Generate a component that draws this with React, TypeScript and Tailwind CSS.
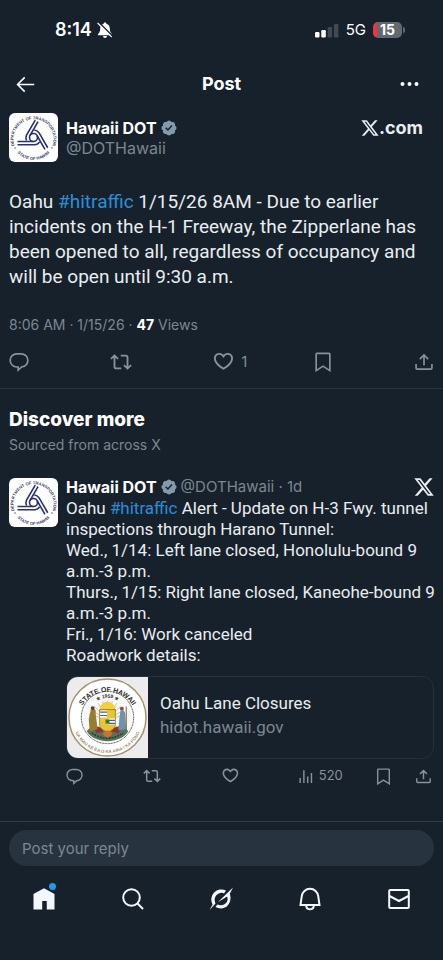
import React from "react";

type IconProps = { className?: string };

const Stroke = ({ className = "", children, width = 2 }: { className?: string; children: React.ReactNode; width?: number }) => (
  <svg viewBox="0 0 24 24" fill="none" stroke="currentColor" strokeWidth={width} className={className} aria-hidden="true">
    {children}
  </svg>
);

const ReplyIcon = ({ className }: IconProps) => (
  <Stroke className={className}>
    <path d="M9.400 2.200h5.200c4.500 0 8 3.300 8 7.600 0 4.200-3 7.300-7.400 8.100l-4.200 3.800v-3.700H9.400c-4.600 0-8-3.600-8-8.100 0-4.400 3.500-7.700 8-7.700z" />
  </Stroke>
);

const RepostIcon = ({ className }: IconProps) => (
  <Stroke className={className}>
    <path d="M1 8.500 4.900 4.800l3.900 3.700M4.900 5v12.200c0 1 .7 1.800 1.800 1.800h5.600M23 15.500l-3.900 3.700-3.900-3.700M19.100 19V6.800c0-1-.7-1.800-1.800-1.800h-5.600" />
  </Stroke>
);

const HeartIcon = ({ className }: IconProps) => (
  <svg viewBox="0 2 23 22" fill="currentColor" className={className} aria-hidden="true">
    <path d="M16.697 5.5c-1.222-.06-2.679.51-3.89 2.16l-.805 1.09-.806-1.09C9.984 6.01 8.526 5.44 7.304 5.5c-1.243.07-2.349.78-2.91 1.91-.552 1.12-.633 2.78.479 4.82 1.074 1.97 3.257 4.27 7.129 6.61 3.87-2.34 6.052-4.64 7.126-6.61 1.111-2.04 1.03-3.7.477-4.82-.561-1.13-1.666-1.84-2.908-1.91zm4.187 7.69c-1.351 2.48-4.001 5.12-8.379 7.67l-.503.3-.504-.3c-4.379-2.55-7.029-5.19-8.382-7.67-1.36-2.5-1.41-4.86-.514-6.67.887-1.79 2.647-2.91 4.601-3.01 1.651-.09 3.368.56 4.798 2.01 1.429-1.45 3.146-2.1 4.796-2.01 1.954.1 3.714 1.22 4.601 3.01.896 1.81.846 4.17-.514 6.67z" />
  </svg>
);

const BookmarkIcon = ({ className }: IconProps) => (
  <Stroke className={className}>
    <path d="M3.800 2.500c0-.5.400-.9.900-.9h14.600c.5 0 .9.400.9.900v19.800L12 17l-8.200 5.300z" />
  </Stroke>
);

const ShareIcon = ({ className }: IconProps) => (
  <Stroke className={className}>
    <path d="M12 16V4M7 8.500l5-5 5 5M2.500 14.500v4.700c0 .8.600 1.300 1.300 1.300h16.400c.7 0 1.300-.5 1.300-1.300v-4.700" />
  </Stroke>
);

const ViewsIcon = ({ className }: IconProps) => (
  <Stroke className={className}>
    <path d="M3 21v-7M8.300 21V3M13.700 21v-9M19 21V7" />
  </Stroke>
);

const VerifiedIcon = ({ className }: IconProps) => (
  <svg viewBox="1 1 20 20" fill="currentColor" className={className} role="img" aria-label="Verified account">
    <path d="M20.396 11c-.018-.646-.215-1.275-.57-1.816-.354-.54-.852-.972-1.438-1.246.223-.607.27-1.264.14-1.897-.131-.634-.437-1.218-.882-1.687-.47-.445-1.053-.75-1.687-.882-.633-.13-1.29-.083-1.897.14-.273-.587-.704-1.086-1.245-1.44S11.647 1.62 11 1.604c-.646.017-1.273.213-1.813.568s-.969.854-1.24 1.44c-.608-.223-1.267-.272-1.902-.14-.635.13-1.22.436-1.69.882-.445.47-.749 1.055-.878 1.688-.13.633-.08 1.29.144 1.896-.587.274-1.087.705-1.443 1.245-.356.54-.555 1.17-.574 1.817.02.647.218 1.276.574 1.817.356.54.856.972 1.443 1.245-.224.606-.274 1.263-.144 1.896.13.634.433 1.218.877 1.688.47.443 1.054.747 1.687.878.633.132 1.29.084 1.897-.136.274.586.705 1.084 1.246 1.439.54.354 1.17.551 1.816.569.647-.016 1.276-.213 1.817-.567s.972-.854 1.245-1.44c.604.239 1.266.296 1.903.164.636-.132 1.22-.447 1.68-.907.46-.46.776-1.044.908-1.681s.075-1.299-.165-1.903c.586-.274 1.084-.705 1.439-1.246.354-.54.551-1.17.569-1.816zM9.662 14.85l-3.429-3.428 1.293-1.302 2.072 2.072 4.4-4.794 1.347 1.246z" />
  </svg>
);

const XLogo = ({ className }: IconProps) => (
  <svg viewBox="1 2 22 20" fill="currentColor" className={className} role="img" aria-label="X">
    <path d="M18.244 2.25h3.308l-7.227 8.26 8.502 11.24H16.17l-5.214-6.817L4.99 21.75H1.68l7.73-8.835L1.254 2.25H8.08l4.713 6.231zm-1.161 17.52h1.833L7.084 4.126H5.117z" />
  </svg>
);

const Avatar = ({ id }: { id: string }) => (
  <svg viewBox="0 0 49 49" className="size-[49px] shrink-0 rounded-md bg-white" role="img" aria-label="Hawaii DOT">
    <defs>
      <path id={`${id}-top`} d="M5.500 32.500A20 20 0 1 1 43.500 32.500" />
      <path id={`${id}-bottom`} d="M5.500 36A22 22 0 0 0 43.500 36" />
    </defs>
    <g fill="#3a3d63" fontFamily="Liberation Sans, sans-serif" fontSize="4.200" fontWeight="700">
      <text><textPath href={`#${id}-top`} startOffset="50%" textAnchor="middle">DEPARTMENT OF TRANSPORTATION</textPath></text>
      <text><textPath href={`#${id}-bottom`} startOffset="50%" textAnchor="middle">STATE OF HAWAII</textPath></text>
    </g>
    <circle cx="6" cy="35" r=".7" fill="#3a3d63" />
    <circle cx="43" cy="35" r=".7" fill="#3a3d63" />
    <g fill="none" stroke="#2b2f75" strokeWidth="1.600">
      {[0, 120, 240].map((angle) => (
        <g key={angle} transform={`rotate(${angle} 24.500 24.500)`}>
          <path d="M8.500 28.500h16" />
          <path d="M8.500 31.700h17.500c2-.2 3.500-1.200 4.600-2.700" />
        </g>
      ))}
      <circle cx="24.500" cy="24.500" r="4" />
    </g>
  </svg>
);

const Seal = () => (
  <svg viewBox="0 0 82 82" className="size-[81px] shrink-0 bg-[#ececec]" role="img" aria-label="State of Hawaii seal">
    <defs>
      <path id="seal-top" d="M11 45A30 30 0 1 1 71 45" />
      <path id="seal-bottom" d="M5 41A36 36 0 0 0 77 41" />
      <path id="seal-year" d="M21 41A20 20 0 0 1 61 41" />
    </defs>
    <circle cx="41" cy="41" r="39" fill="#fff" stroke="#a4916d" strokeWidth="1.500" />
    <circle cx="41" cy="41" r="26.500" fill="#f8f8f6" stroke="#34352f" strokeWidth="1" strokeDasharray="1 .6" />
    <g stroke="#a8a99f" strokeWidth=".6">
      {[-75, -60, -45, -30, -15, 0, 15, 30, 45, 60, 75].map((a) => (
        <path key={a} d="M41 34V24" transform={`rotate(${a} 41 43)`} />
      ))}
    </g>
    <g fontFamily="Liberation Sans, sans-serif" fontWeight="700">
      <text fontSize="7" fill="#2a2a2a"><textPath href="#seal-top" startOffset="50%" textAnchor="middle">STATE  OF  HAWAII</textPath></text>
      <text fontSize="5" fill="#333"><textPath href="#seal-year" startOffset="50%" textAnchor="middle">★ 1959 ★</textPath></text>
      <text fontSize="4.500" fill="#a08c68"><textPath href="#seal-bottom" startOffset="50%" textAnchor="middle">UA MAU KE EA O KA AINA I KA PONO</textPath></text>
    </g>
    <path d="M33 33a8 8 0 0 1 16 0z" fill="#f3cf3e" />
    <path d="M20 55c4-6 9-4 12-1h18c4-4 9-4 12 1-4 7-13 10-21 10s-17-3-21-10z" fill="#53735a" />
    <path d="M27 51c4-2 8 0 10 4l-7 2zM55 51c-4-2-8 0-10 4l7 2z" fill="#8f3431" />
    <path d="M33 33h16v15c0 4-4 6-8 8-4-2-8-4-8-8z" fill="#e9c631" stroke="#5d532a" strokeWidth=".6" />
    <path d="M33.500 34h7v7h-7zM42 42h6.500v6H42z" fill="#fff" />
    <path d="M33.500 35.500h7M33.500 39h7M42 44h6.500M42 47h6.500" stroke="#435ca0" strokeWidth="1.200" />
    <path d="M39 43h4v4h-4z" fill="#397448" />
    <path d="M24 33c3-3 6 0 5 4l2 16-8 2-1-12z" fill="#9a7c2e" />
    <circle cx="26" cy="31.500" r="2" fill="#5c402d" />
    <path d="M54 34c3-2 5 1 5 4l1 15-8 1 1-12z" fill="#6c94ad" />
    <circle cx="55.500" cy="32" r="2" fill="#80543b" />
    <path d="M60 30v24" stroke="#93552f" strokeWidth="1" />
    <path d="M36 58c2-5 8-5 10 0l-5 4z" fill="#c87430" />
    <path d="M25 57c5 2 8 5 16 5s11-3 16-5" fill="none" stroke="#263b30" strokeWidth="1.500" strokeDasharray="2 1" />
  </svg>
);

const Hashtag = () => <a href="#hitraffic" className="text-[#2a8fd8]">#hitraffic</a>;

const StatusBar = () => (
  <div className="flex h-[60px] items-center justify-between pr-[38px] pl-[55px] text-white">
    <div className="flex items-center gap-1">
      <span className="text-lg font-semibold">8:14</span>
      <svg viewBox="0 0 18 18" className="size-[18px]" aria-hidden="true">
        <path d="M9 1.500c.8 0 1.300.5 1.400 1.200 2.300.7 3.400 2.500 3.400 4.900 0 3.300 1 4.200 2 5.300.5.600.2 1.300-.6 1.300H2.800c-.8 0-1.100-.7-.6-1.300 1-1.100 2-2 2-5.300 0-2.400 1.100-4.200 3.400-4.900.1-.7.6-1.200 1.400-1.200zM7 15h4a2 2 0 0 1-4 0z" fill="currentColor" />
        <path d="m2.800 1.200 14 14" stroke="#17212b" strokeWidth="1.500" />
        <path d="m1.600 2 14.200 14.200" stroke="currentColor" strokeWidth="1.200" />
      </svg>
    </div>
    <div className="flex items-center gap-[7px]">
      <svg viewBox="0 0 24 15" className="h-[15px] w-6" aria-hidden="true">
        <rect x="0" y="9" width="4.500" height="5.500" rx="1.200" fill="#fff" />
        <rect x="6.300" y="7" width="4.500" height="7.500" rx="1.200" fill="#fff" />
        <rect x="12.600" y="4" width="4.500" height="10.500" rx="1.200" fill="#414a53" />
        <rect x="18.900" y="1" width="4.500" height="13.500" rx="1.200" fill="#414a53" />
      </svg>
      <span className="text-[15px]">5G</span>
      <div className="flex items-center gap-px">
        <div className="flex h-4 w-[29px] items-center justify-center rounded-[5px] bg-linear-to-r from-[#f0343d] from-15% to-[#626a71] to-15% text-sm font-bold">15</div>
        <div className="h-1.5 w-0.5 rounded-r-full bg-[#626a71]" />
      </div>
    </div>
  </div>
);

const action = "flex flex-1 items-center";

export default function App() {
  return (
    <div className="flex min-h-screen flex-col bg-[#17212b] font-['Inter',sans-serif] text-[#e9edf0]">
      <StatusBar />
      <header className="grid h-12 grid-cols-3 items-center px-4 text-white">
        <button type="button" aria-label="Back" className="justify-self-start">
          <Stroke className="size-[19px]">
            <path d="M23 12H3M11 3 2 12l9 9" />
          </Stroke>
        </button>
        <h1 className="text-center text-lg font-bold">Post</h1>
        <button type="button" aria-label="More" className="justify-self-end pr-2">
          <svg viewBox="0 0 20 6" fill="currentColor" className="h-1.5 w-5" aria-hidden="true">
            <circle cx="3.500" cy="3" r="2" />
            <circle cx="10.500" cy="3" r="2" />
            <circle cx="17.500" cy="3" r="2" />
          </svg>
        </button>
      </header>

      <main className="flex grow flex-col">
        <article className="border-b border-[#25303a] px-[9px] pt-[5px]">
          <div className="flex items-center gap-2">
            <Avatar id="main" />
            <div className="grow text-base leading-5">
              <div className="flex items-center gap-1">
                <span className="font-bold text-white">Hawaii DOT</span>
                <VerifiedIcon className="size-4 text-[#829aab]" />
              </div>
              <div className="text-[#7b8791]">@DOTHawaii</div>
            </div>
            <div className="flex items-center pr-[11px] pb-5">
              <XLogo className="h-4 w-[18px]" />
              <span className="text-lg leading-5 font-bold">.com</span>
            </div>
          </div>
          <p className="mt-[27px] font-['Roboto',sans-serif] text-[19px] leading-[25px]">
            Oahu <Hashtag /> 1/15/26 8AM - Due to earlier<br />
            incidents on the H-1 Freeway, the Zipperlane has<br />
            been opened to all, regardless of occupancy and<br />
            will be open until 9:30 a.m.
          </p>
          <p className="mt-[26px] text-sm leading-5 text-[#7b8791]">
            8:06 AM · 1/15/26 · <span className="font-bold text-white">47</span> Views
          </p>
          <div className="flex h-[53px] items-center text-[#86929c]">
            <button type="button" aria-label="Reply" className={action}><ReplyIcon className="size-5" /></button>
            <button type="button" aria-label="Repost" className={action}><RepostIcon className="size-[22px]" /></button>
            <button type="button" aria-label="Like" className="flex flex-1 items-center gap-2 text-sm"><HeartIcon className="size-[22px]" />1</button>
            <button type="button" aria-label="Bookmark" className={action}><BookmarkIcon className="size-5" /></button>
            <button type="button" aria-label="Share" className="flex items-center"><ShareIcon className="size-5" /></button>
          </div>
        </article>

        <section className="px-[9px] pt-[18px]">
          <h2 className="text-[19px] leading-[26px] font-extrabold text-white">Discover more</h2>
          <p className="text-sm leading-6 text-[#7b8791]">Sourced from across X</p>
          <article className="mt-[19px] flex gap-2">
            <div className="pt-0.5"><Avatar id="discover" /></div>
            <div className="min-w-0 grow">
              <div className="flex h-[22px] items-center text-base">
                <span className="font-bold text-white">Hawaii DOT</span>
                <VerifiedIcon className="mx-1 size-4 text-[#829aab]" />
                <span className="text-[15px] text-[#7b8791]">@DOTHawaii · 1d</span>
                <XLogo className="ml-auto h-[18px] w-5" />
              </div>
              <p className="font-['Roboto',sans-serif] text-[17px] leading-[21px] whitespace-nowrap">
                Oahu <Hashtag /> Alert - Update on H-3 Fwy. tunnel<br />
                inspections through Harano Tunnel:<br />
                Wed., 1/14: Left lane closed, Honolulu-bound 9<br />
                a.m.-3 p.m.<br />
                Thurs., 1/15: Right lane closed, Kaneohe-bound 9<br />
                a.m.-3 p.m.<br />
                Fri., 1/16: Work canceled<br />
                Roadwork details:
              </p>
              <a href="#lane-closures" className="mt-2.5 flex items-center overflow-hidden rounded-xl border border-[#25303a]">
                <Seal />
                <span className="flex flex-col px-3 pb-1.5 font-['Roboto',sans-serif] text-[17px] leading-6">
                  <span>Oahu Lane Closures</span>
                  <span className="text-[#7b8791]">hidot.hawaii.gov</span>
                </span>
              </a>
              <div className="flex h-[34px] items-center text-[#86929c]">
                <button type="button" aria-label="Reply" className={action}><ReplyIcon className="size-[17px]" /></button>
                <button type="button" aria-label="Repost" className={action}><RepostIcon className="size-[18px]" /></button>
                <button type="button" aria-label="Like" className={action}><HeartIcon className="size-[18px]" /></button>
                <button type="button" aria-label="Views" className="flex flex-1 items-center gap-1 text-[13px]"><ViewsIcon className="size-[17px]" />520</button>
                <div className="flex w-[59px] items-center justify-between">
                  <button type="button" aria-label="Bookmark" className="flex items-center"><BookmarkIcon className="size-[17px]" /></button>
                  <button type="button" aria-label="Share" className="flex items-center pr-0.5"><ShareIcon className="size-[17px]" /></button>
                </div>
              </div>
            </div>
          </article>
        </section>
      </main>

      <footer className="border-t border-[#303b46] px-[9px] pt-2">
        <input aria-label="Post your reply" placeholder="Post your reply" className="block h-9 w-full rounded-full bg-[#283340] px-[13px] text-[15px] outline-none placeholder:text-[#7b8791]" />
      </footer>
      <nav className="grid h-[94px] grid-cols-5 justify-items-center pt-[21px] text-[#f4f7f9]">
        <a href="#home" aria-label="Home" className="relative size-6">
          <svg viewBox="0 0 24 24" fill="currentColor" className="size-6" aria-hidden="true">
            <path d="M12 1.300 22.500 7v15.500h-7.700V14h-4.600v8.500H1.500V7z" />
          </svg>
          <span className="absolute -top-1 right-0 size-[7px] rounded-full bg-[#1d9bf0]" />
        </a>
        <a href="#search" aria-label="Search">
          <Stroke className="size-6"><circle cx="10.500" cy="10.500" r="8.300" /><path d="m16.500 16.500 5.500 5.500" /></Stroke>
        </a>
        <a href="#grok" aria-label="Grok">
          <svg viewBox="0 0 24 24" fill="currentColor" className="size-6" aria-hidden="true">
            <path d="M17 3.600A10 10 0 0 0 3.600 17.400L.5 23l6-6.600C4.600 12.500 6 8.500 9.400 6.700c2.200-1.200 4.200-1 5.600-.3zM8.800 15.200 24 .5l-3.200 6.300c2.500 7.400-1.800 14.700-8.800 14.700-2 0-4-.6-5.500-1.700l2.100-2.300c3 1.500 7 .8 9-2.300 1.200-1.900 1.300-3.700.5-5.800z" />
          </svg>
        </a>
        <a href="#notifications" aria-label="Notifications">
          <Stroke className="size-6"><path d="M2.500 18 3.800 8.900C4.300 5 7.600 1.800 12 1.800s7.700 3.200 8.200 7.100L21.500 18zM8 18.300c.4 2.400 1.900 4 4 4s3.600-1.600 4-4" /></Stroke>
        </a>
        <a href="#messages" aria-label="Messages">
          <Stroke className="size-6"><rect x="2.200" y="3" width="19.600" height="18" rx="1" /><path d="m2.500 9 9.500 5 9.500-5" /></Stroke>
        </a>
      </nav>
    </div>
  );
}
